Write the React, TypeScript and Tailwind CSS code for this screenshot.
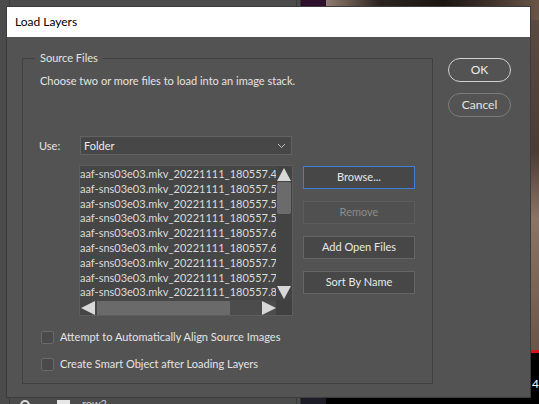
import React from 'react';

const files = ['4', '5', '5', '5', '6', '6', '7', '7', '8'];

function Btn({ label, focused, disabled }: { label: string; focused?: boolean; disabled?: boolean }) {
  return (
    <div
      className={
        'h-[23px] w-[112px] flex items-center justify-center border text-[11px] bg-[#474747] ' +
        (focused
          ? 'border-[#3f7fd9] text-[#e8e8e8]'
          : disabled
          ? 'border-[#5c5c5c] text-[#8c8c8c] bg-[#505050]'
          : 'border-[#666666] text-[#e8e8e8]')
      }
    >
      {label}
    </div>
  );
}

function Check({ label }: { label: string }) {
  return (
    <div className="flex items-center gap-[6px] ml-[1px] h-4">
      <div className="w-[13px] h-[13px] rounded-[2px] border border-[#6a6a6a] bg-[#4a4a4a]" />
      <span className="text-[11px] leading-4 text-[#e4e4e4]">{label}</span>
    </div>
  );
}

export default function App() {
  return (
    <div
      className="relative w-[539px] h-[404px] overflow-hidden bg-[#3a3a3a]"
      style={{ fontFamily: 'Lato, "Noto Sans", sans-serif' }}
    >
      {/* background: app behind the dialog */}
      <div className="absolute left-0 top-0 w-[301px] h-[404px] bg-[#4b4b4b] border-r border-[#333]">
        <div className="absolute left-[9px] top-0 w-px h-full bg-[#3a3a3a]" />
        <div className="absolute left-[296px] top-0 w-px h-full bg-[#3a3a3a]" />
      </div>
      <div className="absolute left-[301px] top-0 w-[25px] h-[8px] bg-[#2e0f2c]" />
      <div className="absolute left-[326px] top-0 right-0 h-[350px] bg-[linear-gradient(90deg,#8e7c6e_0%,#6a5a50_10%,#2c2420_25%,#1b1512_55%,#3a2e28_75%,#6a5648_100%)]" />
      <div className="absolute left-[526px] top-[20px] right-0 h-[330px] bg-[linear-gradient(180deg,#5a4a40_0%,#4c3c33_40%,#8a7466_60%,#6a5648_100%)]" />
      <div className="absolute left-[326px] top-[350px] right-0 h-[3px] bg-[#e0101a]" />
      <div className="absolute left-[326px] top-[353px] right-0 bottom-0 bg-black" />
      <div className="absolute left-[301px] top-[353px] w-[25px] bottom-0 bg-[#1c1c26]" />
      <div className="absolute left-[532px] top-[376px] text-[12px] leading-4 text-white">43</div>
      <div className="absolute left-[20px] top-[400px] w-[10px] h-[10px] rounded-full border-2 border-[#ddd]" />
      <div className="absolute left-[57px] top-[400px] w-[13px] h-[10px] bg-[#e6e6e6]" />
      <div className="absolute left-[82px] top-[396px] text-[11px] leading-4 text-[#ccc]">row2</div>

      {/* dialog */}
      <div className="absolute left-[6px] top-[6px] w-[525px] h-[392px] border border-[#3b3b3b] bg-[#535353] flex flex-col">
        <div className="h-[30px] bg-white flex items-center pl-[8px] text-[12px] text-black">Load Layers</div>
        <div className="flex pl-[15px] pt-[21px]">
          <div className="relative w-[411px] h-[326px] border border-[#414141]">
            <span className="absolute left-[12px] -top-[9px] px-[5px] bg-[#535353] text-[11px] leading-4 text-[#e4e4e4]">
              Source Files
            </span>
            <div className="flex flex-col pl-[17px] pt-[14px]">
              <div className="text-[11px] leading-4 text-[#e4e4e4]">
                Choose two or more files to load into an image stack.
              </div>
              <div className="flex items-center mt-[47px]">
                <span className="w-[40px] text-[11px] leading-4 text-[#e4e4e4] -ml-[1px]">Use:</span>
                <div className="ml-[1px] w-[212px] h-[19px] border border-[#626262] bg-[#474747] flex items-center justify-between pl-[3px] pr-[5px]">
                  <span className="text-[11px] leading-4 text-[#ececec]">Folder</span>
                  <svg width="9" height="6" viewBox="0 0 9 6" fill="none" stroke="#bdbdbd" strokeWidth="1">
                    <path d="M1 1l3.5 3.5L8 1" />
                  </svg>
                </div>
              </div>
              <div className="flex mt-[10px] ml-[39px]">
                <div className="w-[214px] h-[151px] border border-[#5d5d5d] bg-[#464646] flex flex-col">
                  <div className="flex h-[134px]">
                    <div className="w-[196px] overflow-hidden pt-[1px]">
                      {files.map((f, i) => (
                        <div key={i} className="h-[14.8px] leading-[14.8px] text-[11px] text-[#dcdcdc] whitespace-nowrap">
                          aaf-sns03e03.mkv_20221111_180557.{f}
                        </div>
                      ))}
                    </div>
                    <div className="w-[16px] flex flex-col items-center bg-[#434343]">
                      <svg width="14" height="13" viewBox="0 0 14 13" className="mt-[2px]">
                        <path d="M7 0L14 13H0Z" fill="#d8d8d8" />
                      </svg>
                      <div className="mt-[1px] w-[14px] h-[32px] rounded-[2px] bg-[#6b6b6b]" />
                      <div className="flex-1" />
                      <svg width="14" height="13" viewBox="0 0 14 13" className="mb-[1px]">
                        <path d="M0 0H14L7 13Z" fill="#d8d8d8" />
                      </svg>
                    </div>
                  </div>
                  <div className="flex h-[15px] items-center">
                    <svg width="14" height="14" viewBox="0 0 14 14" className="ml-[1px]">
                      <path d="M14 0V14L0 7Z" fill="#d8d8d8" />
                    </svg>
                    <div className="ml-[2px] w-[133px] h-[14px] bg-[#6a6a6a]" />
                    <div className="flex-1 h-[15px] bg-[#4c4c4c]" />
                    <svg width="14" height="14" viewBox="0 0 14 14" className="bg-[#4c4c4c]">
                      <path d="M0 0V14L14 7Z" fill="#d8d8d8" />
                    </svg>
                    <div className="w-[16px] h-[15px] bg-[#404040]" />
                  </div>
                </div>
                <div className="ml-[10px] pt-[1px] flex flex-col gap-[12px]">
                  <Btn label="Browse..." focused />
                  <Btn label="Remove" disabled />
                  <Btn label="Add Open Files" />
                  <Btn label="Sort By Name" />
                </div>
              </div>
              <div className="mt-[13px]">
                <Check label="Attempt to Automatically Align Source Images" />
              </div>
              <div className="mt-[11px]">
                <Check label="Create Smart Object after Loading Layers" />
              </div>
            </div>
          </div>
          <div className="ml-[15px] flex flex-col">
            <div className="w-[63px] h-[24px] rounded-full border border-[#d0d0d0] flex items-center justify-center text-[12px] text-[#ececec]">
              OK
            </div>
            <div className="mt-[11px] w-[63px] h-[24px] rounded-full border border-[#7c7c7c] flex items-center justify-center text-[12px] text-[#e4e4e4]">
              Cancel
            </div>
          </div>
        </div>
      </div>
    </div>
  );
}
